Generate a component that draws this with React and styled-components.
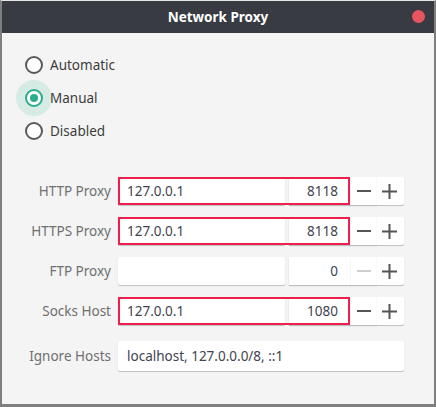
import styled, { createGlobalStyle } from "styled-components";

const GlobalStyle = createGlobalStyle`
  body {
    margin: 0;
    background: #f4f4f4;
    font-family: "Noto Sans", "Open Sans", sans-serif;
  }
`;

const proxies = [
  { label: "HTTP Proxy", host: "127.0.0.1", port: "8118", marked: true },
  { label: "HTTPS Proxy", host: "127.0.0.1", port: "8118", marked: true },
  { label: "FTP Proxy", host: "", port: "0", marked: false },
  { label: "Socks Host", host: "127.0.0.1", port: "1080", marked: true },
];

function Minus({ off }) {
  return (
    <svg width="14" height="14" viewBox="0 0 14 14">
      <path d="M0 7H14" stroke={off ? "#cfcfcf" : "#555"} strokeWidth="2" />
    </svg>
  );
}

function Plus() {
  return (
    <svg width="15" height="15" viewBox="0 0 15 15">
      <path d="M0 7.5H15M7.5 0V15" stroke="#555" strokeWidth="2" />
    </svg>
  );
}

function App() {
  const modes = ["Automatic", "Manual", "Disabled"];
  return (
    <>
      <GlobalStyle />
      <Frame>
        <TitleBar>
          <Title>Network Proxy</Title>
          <CloseDot />
        </TitleBar>
        <Body>
          <RadioList>
            {modes.map((m) => (
              <RadioRow key={m}>
                <RadioCircle checked={m === "Manual"} />
                <span>{m}</span>
              </RadioRow>
            ))}
          </RadioList>
          <ProxyGrid>
            {proxies.map((p) => (
              <ProxyRow key={p.label}>
                <Label>{p.label}</Label>
                <Fields>
                  <Marked marked={p.marked}>
                    <HostInput>{p.host}</HostInput>
                    <PortInput>{p.port}</PortInput>
                  </Marked>
                  <SpinBtn>
                    <Minus off={p.port === "0"} />
                  </SpinBtn>
                  <SpinBtn last>
                    <Plus />
                  </SpinBtn>
                </Fields>
              </ProxyRow>
            ))}
            <ProxyRow ignore>
              <Label>Ignore Hosts</Label>
              <IgnoreInput>localhost, 127.0.0.0/8, ::1</IgnoreInput>
            </ProxyRow>
          </ProxyGrid>
        </Body>
      </Frame>
    </>
  );
}

const Frame = styled.div`
  width: 436px;
  height: 407px;
  box-sizing: border-box;
  border: 2px solid #7f7f7f;
  border-top: 1px solid #e6e6e6;
  border-bottom-width: 3px;
  background: #f4f4f4;
  display: flex;
  flex-direction: column;
`;

const TitleBar = styled.div`
  position: relative;
  height: 32px;
  background: #383b41;
  display: flex;
  align-items: center;
  justify-content: center;
`;

const Title = styled.span`
  color: #ffffff;
  font-weight: bold;
  font-size: 13.5px;
`;

const CloseDot = styled.span`
  position: absolute;
  right: 9px;
  top: 9px;
  width: 13px;
  height: 13px;
  border-radius: 50%;
  background: #e8545f;
`;

const Body = styled.div`
  flex: 1;
  padding: 15px 30px 0 0;
`;

const RadioList = styled.div`
  display: flex;
  flex-direction: column;
  padding-left: 23px;
`;

const RadioRow = styled.div`
  isolation: isolate;
  height: 33px;
  display: flex;
  align-items: center;
  gap: 7px;
  font-size: 13.5px;
  color: #3c3c3c;
`;

const RadioCircle = styled.span`
  position: relative;
  width: 14px;
  height: 14px;
  border-radius: 50%;
  border: 2px solid ${(p) => (p.checked ? "#2aac8d" : "#5a5a5a")};
  background: #ffffff;
  flex-shrink: 0;
  &::before {
    content: "";
    display: ${(p) => (p.checked ? "block" : "none")};
    position: absolute;
    left: -11px;
    top: -11px;
    width: 36px;
    height: 36px;
    border-radius: 50%;
    background: #d5ebe4;
    z-index: -1;
  }
  &::after {
    content: "";
    display: ${(p) => (p.checked ? "block" : "none")};
    position: absolute;
    left: 3px;
    top: 3px;
    width: 8px;
    height: 8px;
    border-radius: 50%;
    background: #2aac8d;
  }
`;

const ProxyGrid = styled.div`
  margin-top: 30px;
  display: flex;
  flex-direction: column;
  gap: 12px;
`;

const ProxyRow = styled.div`
  display: grid;
  grid-template-columns: 109px 1fr;
  column-gap: 7px;
  align-items: center;
  height: ${(p) => (p.ignore ? "30px" : "28px")};
  margin-top: ${(p) => (p.ignore ? "4px" : "0")};
`;

const Label = styled.span`
  text-align: right;
  font-size: 13.5px;
  color: #6f6f6f;
`;

const Fields = styled.div`
  display: flex;
  height: 28px;
`;

const Marked = styled.div`
  position: relative;
  display: flex;
  gap: 4px;
  &::after {
    content: "";
    display: ${(p) => (p.marked ? "block" : "none")};
    position: absolute;
    inset: 0;
    border: 2px solid #f01e4c;
    pointer-events: none;
  }
`;

const Box = styled.div`
  background: #ffffff;
  box-shadow: 0 1px 1px rgba(0, 0, 0, 0.22);
  font-size: 13.5px;
  color: #404450;
  display: flex;
  align-items: center;
  box-sizing: border-box;
`;

const HostInput = styled(Box)`
  width: 167px;
  padding-left: 9px;
  border-radius: 2px;
`;

const PortInput = styled(Box)`
  width: 61px;
  justify-content: flex-end;
  padding-right: 12px;
`;

const SpinBtn = styled(Box)`
  width: 27px;
  justify-content: center;
  border-radius: ${(p) => (p.last ? "0 2px 2px 0" : "0")};
  padding-right: ${(p) => (p.last ? "2px" : "0")};
`;

const IgnoreInput = styled(Box)`
  height: 30px;
  padding-left: 9px;
  border-radius: 2px;
`;

export default App;
